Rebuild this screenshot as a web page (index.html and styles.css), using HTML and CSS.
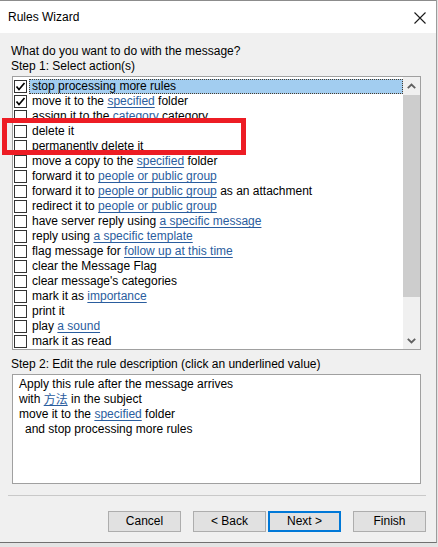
FILE: index.html
```html
<!DOCTYPE html>
<html>
<head>
<meta charset="utf-8">
<title>Rules Wizard</title>
<link rel="stylesheet" href="styles.css">
</head>
<body>
<div class="window">
  <div class="titlebar">
    <span class="title">Rules Wizard</span>
    <svg class="close" width="12" height="12" viewBox="0 0 12 12"><path d="M0.5 0.5 L11.5 11.5 M11.5 0.5 L0.5 11.5" stroke="#1a1a1a" stroke-width="1.1" fill="none"/></svg>
  </div>
  <div class="content">
    <div class="label">What do you want to do with the message?</div>
    <div class="label">Step 1: Select action(s)</div>
    <div class="listbox">
      <ul class="items">
        <li class="item"><span class="cb"><svg width="11" height="11" viewBox="0 0 11 11"><path d="M1.5 5.5 L4 8.5 L9.5 2" stroke="#000" stroke-width="1.7" fill="none"/></svg></span><span class="txt selected">stop processing more rules</span></li>
        <li class="item"><span class="cb"><svg width="11" height="11" viewBox="0 0 11 11"><path d="M1.5 5.5 L4 8.5 L9.5 2" stroke="#000" stroke-width="1.7" fill="none"/></svg></span><span class="txt">move it to the <u class="lnk">specified</u> folder</span></li>
        <li class="item"><span class="cb"></span><span class="txt">assign it to the <u class="lnk">category</u> category</span></li>
        <li class="item"><span class="cb"></span><span class="txt">delete it</span></li>
        <li class="item"><span class="cb"></span><span class="txt">permanently delete it</span></li>
        <li class="item"><span class="cb"></span><span class="txt">move a copy to the <u class="lnk">specified</u> folder</span></li>
        <li class="item"><span class="cb"></span><span class="txt">forward it to <u class="lnk">people or public group</u></span></li>
        <li class="item"><span class="cb"></span><span class="txt">forward it to <u class="lnk">people or public group</u> as an attachment</span></li>
        <li class="item"><span class="cb"></span><span class="txt">redirect it to <u class="lnk">people or public group</u></span></li>
        <li class="item"><span class="cb"></span><span class="txt">have server reply using <u class="lnk">a specific message</u></span></li>
        <li class="item"><span class="cb"></span><span class="txt">reply using <u class="lnk">a specific template</u></span></li>
        <li class="item"><span class="cb"></span><span class="txt">flag message for <u class="lnk">follow up at this time</u></span></li>
        <li class="item"><span class="cb"></span><span class="txt">clear the Message Flag</span></li>
        <li class="item"><span class="cb"></span><span class="txt">clear message's categories</span></li>
        <li class="item"><span class="cb"></span><span class="txt">mark it as <u class="lnk">importance</u></span></li>
        <li class="item"><span class="cb"></span><span class="txt">print it</span></li>
        <li class="item"><span class="cb"></span><span class="txt">play <u class="lnk">a sound</u></span></li>
        <li class="item"><span class="cb"></span><span class="txt">mark it as read</span></li>
      </ul>
      <div class="scrollbar">
        <div class="sb-btn"><svg width="9" height="6" viewBox="0 0 9 6"><path d="M0.8 5.2 L4.5 1.5 L8.2 5.2" stroke="#606060" stroke-width="1.8" fill="none"/></svg></div>
        <div class="sb-track"><div class="sb-thumb"></div></div>
        <div class="sb-btn"><svg width="9" height="6" viewBox="0 0 9 6"><path d="M0.8 0.8 L4.5 4.5 L8.2 0.8" stroke="#606060" stroke-width="1.8" fill="none"/></svg></div>
      </div>
    </div>
    <div class="label step2">Step 2: Edit the rule description (click an underlined value)</div>
    <div class="desc">
      <div class="dline">Apply this rule after the message arrives</div>
      <div class="dline">with <u class="lnk cjk">方法</u> in the subject</div>
      <div class="dline">move it to the <u class="lnk">specified</u> folder</div>
      <div class="dline sub">and stop processing more rules</div>
    </div>
    <div class="sep"></div>
    <div class="buttons">
      <button class="btn">Cancel</button>
      <button class="btn back">&lt; Back</button>
      <button class="btn default">Next &gt;</button>
      <button class="btn finish">Finish</button>
    </div>
  </div>
  <div class="callout"></div>
</div>
</body>
</html>
```
FILE: styles.css
```css
* { box-sizing: border-box; }
html, body { margin: 0; padding: 0; }
body {
  width: 438px;
  height: 547px;
  overflow: hidden;
  background: #e4e4e4;
  font-family: "Liberation Sans", Arial, sans-serif;
  font-size: 12px;
  color: #000;
}
.window {
  position: relative;
  width: 437px;
  height: 543px;
  background: #f0f0f0;
  border-right: 1px solid #9c9c9c;
  border-bottom: 1px solid #707070;
}
.titlebar {
  height: 33px;
  background: #fff;
  border-top: 1px solid #8c8c8c;
  display: flex;
  align-items: center;
  justify-content: space-between;
  padding: 0 10px 0 8px;
}
.title { font-size: 12px; line-height: 15px; margin-top: 1px; }
.close { margin-top: 1px; }
.content {
  padding: 11px 15px 0 12px;
}
.label {
  line-height: 15px;
  margin-left: -1px;
  white-space: nowrap;
}
.listbox {
  margin-top: 2px;
  height: 274px;
  border: 1px solid #a0a0a0;
  background: #fff;
  display: flex;
  overflow: hidden;
}
.items {
  list-style: none;
  margin: 0;
  padding: 2px 0 0 0;
  flex: 1;
  overflow: hidden;
}
.item {
  height: 15px;
  display: flex;
  align-items: center;
  white-space: nowrap;
}
.cb {
  width: 13px;
  height: 13px;
  margin-left: 1px;
  border: 1px solid #333;
  background: #fff;
  display: flex;
  align-items: center;
  justify-content: center;
  flex: none;
}
.cb svg { display: block; }
.txt {
  flex: 1;
  margin-left: 2px;
  padding-left: 2px;
  height: 15px;
  line-height: 12px;
  border: 1px solid transparent;
}
.txt.selected {
  background: #a2cdf0;
  border: 1px dotted #4b3b2a;
}
.lnk {
  color: #2a5d9e;
  text-decoration: underline;
  text-underline-offset: 2px;
}
.cjk {
  font-family: "Noto Sans CJK SC", "Liberation Sans", sans-serif;
  display: inline-block;
  height: 14px;
  line-height: 14px;
  vertical-align: top;
  text-underline-offset: 1px;
}
.scrollbar {
  width: 17px;
  flex: none;
  background: #f0f0f0;
  display: flex;
  flex-direction: column;
}
.sb-btn {
  height: 17px;
  display: flex;
  align-items: center;
  justify-content: center;
  flex: none;
}
.sb-track { flex: 1; padding-top: 1px; }
.sb-thumb { height: 202px; background: #cdcdcd; }
.step2 { margin-top: 7px; }
.desc {
  margin-top: 2px;
  height: 110px;
  border: 1px solid #a0a0a0;
  background: #fff;
  padding: 2px 0 0 6px;
}
.dline { height: 15px; line-height: 15px; white-space: nowrap; }
.dline.sub { padding-left: 6px; }
.sep {
  height: 1px;
  background: #c9c9c9;
  margin: 11px -5px 0 -4px;
}
.buttons {
  margin: 15px -5px 0 0;
  display: flex;
  justify-content: flex-end;
}
.btn {
  width: 73px;
  height: 21px;
  padding: 0;
  background: #e1e1e1;
  border: 1px solid #adadad;
  font-family: "Liberation Sans", Arial, sans-serif;
  font-size: 12px;
  color: #000;
  line-height: 17px;
}
.back { margin-left: 12px; }
.default { margin-left: 2px; border: 2px solid #0078d7; }
.finish { margin-left: 12px; }
.callout {
  position: absolute;
  left: 2px;
  top: 118px;
  width: 244px;
  height: 37px;
  border: 5px solid #ed1c24;
}
```
